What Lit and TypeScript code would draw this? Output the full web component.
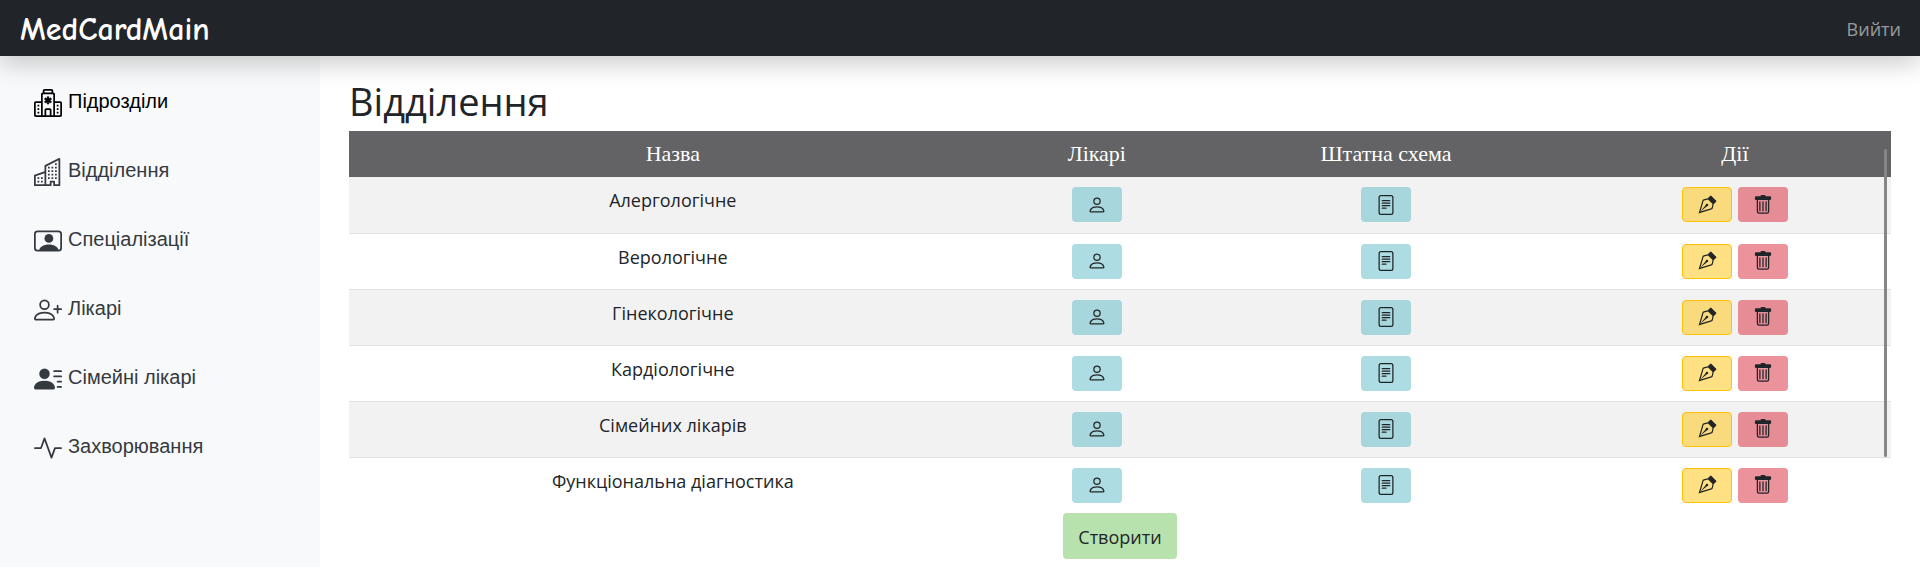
import { LitElement, html, css, svg } from "lit";
import { customElement } from "lit/decorators.js";

const icons: Record<string, unknown> = {
  hospital: svg`<path d="M8.500 4.400v1.200l1.050-.600.500.870L9 6.500l1.050.600-.500.870L8.500 7.400v1.200h-1V7.400l-1.050.570-.500-.870L7 6.500l-1.050-.630.500-.870 1.050.600V4.400z" stroke="currentColor" stroke-width=".3"/><path d="M2 9h1v1H2zm0 2h1v1H2zm0 2h1v1H2zm11-4h1v1h-1zm0 2h1v1h-1zm0 2h1v1h-1z"/><path d="M5 1a1 1 0 0 1 1-1h4a1 1 0 0 1 1 1v1a1 1 0 0 1 1 1v4h3a1 1 0 0 1 1 1v7a1 1 0 0 1-1 1H1a1 1 0 0 1-1-1V8a1 1 0 0 1 1-1h3V3a1 1 0 0 1 1-1zm2 14h2v-3H7zm3 0h1V3H5v12h1v-3a1 1 0 0 1 1-1h2a1 1 0 0 1 1 1zm0-14H6v1h4zm2 7v7h3V8zm-8 7V8H1v7z"/>`,
  buildings: svg`<path d="M14.763.075A.5.5 0 0 1 15 .5v15a.5.5 0 0 1-.5.5h-3a.5.5 0 0 1-.5-.5V14h-1v1.500a.5.5 0 0 1-.5.5h-9a.5.5 0 0 1-.5-.5V10a.5.5 0 0 1 .342-.474L6 7.640V4.500a.5.5 0 0 1 .276-.447l8-4a.5.5 0 0 1 .487.022M6 8.694 1 10.360V15h5zM7 15h2v-1.500a.5.5 0 0 1 .5-.5h2a.5.5 0 0 1 .5.5V15h2V1.309l-7 3.500z"/><path d="M2 11h1v1H2zm2 0h1v1H4zm-2 2h1v1H2zm2 0h1v1H4zm4-4h1v1H8zm2 0h1v1h-1zm-2 2h1v1H8zm2 0h1v1h-1zm2-2h1v1h-1zm0 2h1v1h-1zM8 7h1v1H8zm2 0h1v1h-1zm2 0h1v1h-1zM8 5h1v1H8zm2 0h1v1h-1zm2 0h1v1h-1zm0-2h1v1h-1z"/>`,
  badge: svg`<path d="M11 6.500a2.500 2.500 0 1 1-5 0 2.500 2.500 0 0 1 5 0z"/><path d="M2 2a2 2 0 0 0-2 2v8a2 2 0 0 0 2 2h12a2 2 0 0 0 2-2V4a2 2 0 0 0-2-2zm12 1a1 1 0 0 1 1 1v8a1 1 0 0 1-1 1c-.6-1.800-2.600-3-5.500-3S3.600 11.200 3 13H2a1 1 0 0 1-1-1V4a1 1 0 0 1 1-1z"/>`,
  personPlus: svg`<path d="M6 8a3 3 0 1 0 0-6 3 3 0 0 0 0 6m2-3a2 2 0 1 1-4 0 2 2 0 0 1 4 0m4 8c0 1-1 1-1 1H1s-1 0-1-1 1-4 6-4 6 3 6 4m-1-.004c-.001-.246-.154-.986-.832-1.664C9.516 10.680 8.289 10 6 10s-3.516.68-4.168 1.332c-.678.678-.83 1.418-.832 1.664z"/><path d="M13.500 5a.5.5 0 0 1 .5.5V7h1.500a.5.5 0 0 1 0 1H14v1.500a.5.5 0 0 1-1 0V8h-1.500a.5.5 0 0 1 0-1H13V5.500a.5.5 0 0 1 .5-.5"/>`,
  personLines: svg`<path d="M6 8a3 3 0 1 0 0-6 3 3 0 0 0 0 6m-5 6s-1 0-1-1 1-4 6-4 6 3 6 4-1 1-1 1zM11 3.500a.5.5 0 0 1 .5-.5h4a.5.5 0 0 1 0 1h-4a.5.5 0 0 1-.5-.5m.5 2.500a.5.5 0 0 0 0 1h4a.5.5 0 0 0 0-1zm2 3a.5.5 0 0 0 0 1h2a.5.5 0 0 0 0-1zm0 3a.5.5 0 0 0 0 1h2a.5.5 0 0 0 0-1z"/>`,
  activity: svg`<path fill-rule="evenodd" d="M6 2a.5.5 0 0 1 .470.330L10 12.036l1.530-4.208A.5.5 0 0 1 12 7.500h3.500a.5.5 0 0 1 0 1h-3.150l-1.880 5.170a.5.5 0 0 1-.940 0L6 3.964 4.470 8.171A.5.5 0 0 1 4 8.500H.500a.5.5 0 0 1 0-1h3.150l1.880-5.170A.5.5 0 0 1 6 2"/>`,
  person: svg`<path d="M8 8a3 3 0 1 0 0-6 3 3 0 0 0 0 6m2-3a2 2 0 1 1-4 0 2 2 0 0 1 4 0m4 8c0 1-1 1-1 1H3s-1 0-1-1 1-4 6-4 6 3 6 4m-1-.004c-.001-.246-.154-.986-.832-1.664C11.516 10.680 10.289 10 8 10s-3.516.68-4.168 1.332c-.678.678-.83 1.418-.832 1.664z"/>`,
  file: svg`<path d="M5 4a.5.5 0 0 0 0 1h6a.5.5 0 0 0 0-1zm-.5 2.500A.5.5 0 0 1 5 6h6a.5.5 0 0 1 0 1H5a.5.5 0 0 1-.5-.5M5 8a.5.5 0 0 0 0 1h6a.5.5 0 0 0 0-1zm0 2a.5.5 0 0 0 0 1h3a.5.5 0 0 0 0-1z"/><path d="M2 2a2 2 0 0 1 2-2h8a2 2 0 0 1 2 2v12a2 2 0 0 1-2 2H4a2 2 0 0 1-2-2zm10-1H4a1 1 0 0 0-1 1v12a1 1 0 0 0 1 1h8a1 1 0 0 0 1-1V2a1 1 0 0 0-1-1"/>`,
  pen: svg`<path fill-rule="evenodd" d="M10.646.646a.5.5 0 0 1 .708 0l4 4a.5.5 0 0 1 0 .708l-1.902 1.902-.829 3.313a1.500 1.500 0 0 1-1.024 1.073L1.254 14.746 4.358 4.400A1.500 1.500 0 0 1 5.430 3.377l3.313-.828zm-1.800 2.908-3.173.793a.5.5 0 0 0-.358.342l-2.570 8.565 8.567-2.570a.5.5 0 0 0 .341-.357l.794-3.174z"/><path fill-rule="evenodd" d="M2.832 13.228 8 9a1 1 0 1 0-1-1l-4.228 5.168-.026.086z"/>`,
  trash: svg`<path fill-rule="evenodd" d="M2.500 1a1 1 0 0 0-1 1v1a1 1 0 0 0 1 1H3v9a2 2 0 0 0 2 2h6a2 2 0 0 0 2-2V4h.500a1 1 0 0 0 1-1V2a1 1 0 0 0-1-1H10a1 1 0 0 0-1-1H7a1 1 0 0 0-1 1zM4 4h8v9a1 1 0 0 1-1 1H5a1 1 0 0 1-1-1z"/><path d="M5.500 5a.5.5 0 0 1 .5.500v7a.5.5 0 0 1-1 0v-7a.5.5 0 0 1 .5-.5M8 5a.5.5 0 0 1 .5.500v7a.5.5 0 0 1-1 0v-7A.5.5 0 0 1 8 5m2.500 0a.5.5 0 0 1 .5.500v7a.5.5 0 0 1-1 0v-7a.5.5 0 0 1 .5-.5"/>`,
};

const icon = (name: string) =>
  html`<svg viewBox="0 0 16 16" fill="currentColor" aria-hidden="true">${icons[name]}</svg>`;

const links = [
  ["hospital", "Підрозділи"],
  ["buildings", "Відділення"],
  ["badge", "Спеціалізації"],
  ["personPlus", "Лікарі"],
  ["personLines", "Сімейні лікарі"],
  ["activity", "Захворювання"],
];

const departments = [
  "Алергологічне",
  "Верологічне",
  "Гінекологічне",
  "Кардіологічне",
  "Сімейних лікарів",
  "Функціональна діагностика",
];

@customElement("app-root")
export class AppRoot extends LitElement {
  static styles = css`
    :host {
      display: flex;
      flex-direction: column;
      min-height: 100vh;
      background: #fff;
      color: #212529;
      font: 18px/27px "Segoe UI", "Open Sans", "Noto Sans", sans-serif;
    }
    * { box-sizing: border-box; }
    a { color: inherit; text-decoration: none; }
    svg { display: block; flex: none; }
    header {
      display: flex;
      align-items: center;
      justify-content: space-between;
      height: 56px;
      padding: 0 19px 0 20px;
      background: #212529;
      box-shadow: 0 8px 24px rgba(0, 0, 0, 0.2);
      position: relative;
    }
    .brand {
      padding-top: 4px;
      color: #fff;
      font: 700 32px/42px "Comic Sans MS", "Comic Neue", "Open Sans", sans-serif;
    }
    .exit { color: rgba(255, 255, 255, 0.55); padding-top: 2px; }
    .body { display: flex; flex: 1; align-items: stretch; }
    nav {
      flex: 0 0 16.6667%;
      padding: 25px 34px;
      margin-bottom: 12px;
      background: #f8f9fa;
      font: 20px/30px Arial, "Liberation Sans", sans-serif;
    }
    ul { display: grid; gap: 33px; margin: 0; padding: 0; list-style: none; }
    .link { display: flex; gap: 6px; height: 36px; padding-top: 5px; color: #343a40; }
    .link svg { width: 28px; height: 28px; margin-top: 3px; }
    .current { color: #000; }
    main { flex: 1; padding: 21px 29px 0; }
    h1 {
      margin: 0 0 6px;
      font: 500 38px/48px "Comic Sans MS", "Open Sans", sans-serif;
    }
    .scroller { position: relative; }
    table { width: 100%; border-collapse: collapse; table-layout: fixed; text-align: center; }
    .name { width: 42%; }
    .doctors { width: 13%; }
    .scheme { width: 24.5%; }
    th {
      height: 46px;
      padding: 0 8px 2px;
      background: #636365;
      color: #fff;
      font: 22px/33px "Times New Roman", "Liberation Serif", serif;
    }
    td { height: 56px; padding: 10px 8px; vertical-align: top; border-bottom: 1px solid #dee2e6; }
    th:last-child, td:last-child { padding-left: 12px; }
    tbody tr:nth-child(odd) { background: #f2f2f2; }
    tbody tr:last-child td { border-bottom: 0; }
    .actions { display: flex; justify-content: center; gap: 6px; }
    button { font: inherit; color: inherit; border: 1px solid transparent; border-radius: 4px; cursor: pointer; }
    .icon-button { display: flex; align-items: center; justify-content: center; width: 50px; height: 35px; padding: 0; }
    .icon-button svg { width: 20px; height: 20px; }
    .info { background: rgba(91, 186, 197, 0.5); }
    .edit { background: rgba(255, 193, 7, 0.5); border-color: #ffc107; }
    .remove { background: rgba(216, 38, 56, 0.5); }
    .thumb {
      position: absolute;
      top: 18px;
      right: 4px;
      bottom: 56px;
      width: 3px;
      border-radius: 2px;
      background: #868686;
    }
    .footer { display: flex; justify-content: center; }
    .create { height: 46px; padding: 2px 14px 0; background: #b7e2ad; }
  `;

  private iconButton(kind: string, name: string, label: string) {
    return html`<button class="icon-button ${kind}" type="button" aria-label=${label}>${icon(name)}</button>`;
  }

  render() {
    return html`
      <header>
        <a class="brand" href="#">MedCardMain</a>
        <a class="exit" href="#">Вийти</a>
      </header>
      <div class="body">
        <nav>
          <ul>
            ${links.map(([name, label], i) => html`
              <li><a class="link ${i === 0 ? "current" : ""}" href="#">${icon(name)}<span>${label}</span></a></li>`)}
          </ul>
        </nav>
        <main>
          <h1>Відділення</h1>
          <div class="scroller">
            <table>
              <thead>
                <tr>
                  <th class="name" scope="col">Назва</th>
                  <th class="doctors" scope="col">Лікарі</th>
                  <th class="scheme" scope="col">Штатна схема</th>
                  <th scope="col">Дії</th>
                </tr>
              </thead>
              <tbody>
                ${departments.map((name) => html`
                  <tr>
                    <td>${name}</td>
                    <td><div class="actions">${this.iconButton("info", "person", "Лікарі")}</div></td>
                    <td><div class="actions">${this.iconButton("info", "file", "Штатна схема")}</div></td>
                    <td>
                      <div class="actions">
                        ${this.iconButton("edit", "pen", "Редагувати")}
                        ${this.iconButton("remove", "trash", "Видалити")}
                      </div>
                    </td>
                  </tr>`)}
              </tbody>
            </table>
            <div class="thumb"></div>
          </div>
          <div class="footer"><button class="create" type="button">Створити</button></div>
        </main>
      </div>
    `;
  }
}
